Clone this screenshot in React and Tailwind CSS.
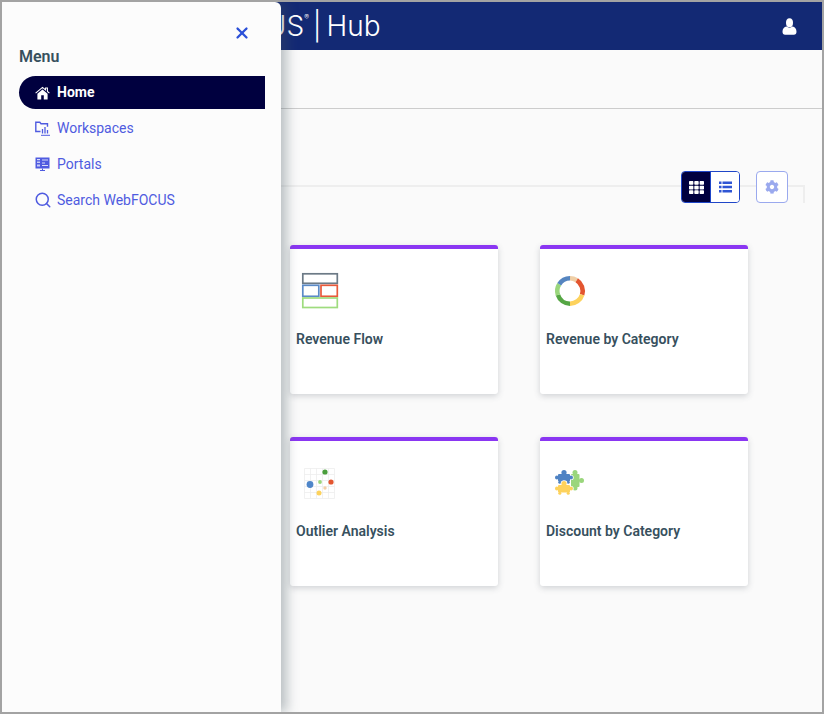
import React from 'react';
import { FaTh, FaCog } from 'react-icons/fa';
import { Search, X } from 'lucide-react';

function HomeIcon() {
  return (
    <svg width="15" height="14" viewBox="0 0 15 14" fill="currentColor">
      <path d="M7.5 3.6 2.4 7.8V13.5h3.8V9.3h2.6v4.2h3.8V7.8z" />
      <path d="M.6 7.2 7.5 1.4l3 2.5V2h1.9v3.5l2 1.7" fill="none" stroke="currentColor" strokeWidth="1.1" />
    </svg>
  );
}

function UserIcon() {
  return (
    <svg width="15" height="17" viewBox="0 0 15 17" fill="currentColor">
      <ellipse cx="7.5" cy="4.8" rx="3.5" ry="4.5" />
      <path d="M4.6 8.6c1.6 1.5 4.2 1.5 5.8 0 2.6.4 4.1 2.2 4.1 5.2 0 1.8-1 3-2.6 3H3.1c-1.6 0-2.6-1.2-2.6-3 0-3 1.5-4.8 4.1-5.2z" />
    </svg>
  );
}

function ListIcon() {
  return (
    <svg width="13" height="12" viewBox="0 0 13 12" fill="currentColor">
      <rect x="0" y="0.5" width="2.5" height="2.5" />
      <rect x="3.5" y="0.5" width="9.5" height="2.5" />
      <rect x="0" y="4.75" width="2.5" height="2.5" />
      <rect x="3.5" y="4.75" width="9.5" height="2.5" />
      <rect x="0" y="9" width="2.5" height="2.5" />
      <rect x="3.5" y="9" width="9.5" height="2.5" />
    </svg>
  );
}

function WorkspacesIcon() {
  return (
    <svg width="15" height="15" viewBox="0 0 15 15" fill="none" stroke="currentColor">
      <path d="M5.5 10.5H.8V1.2h4L6 2.7h6.5v3" strokeWidth="1.4" />
      <path d="M7.5 8v4.5M10 6v6.5M12.5 9v3.5" strokeWidth="1.3" />
      <path d="M6 14.3h9" strokeWidth="1" />
    </svg>
  );
}

function PortalsIcon() {
  return (
    <svg width="15" height="15" viewBox="0 0 15 15">
      <rect x="0.5" y="0.5" width="14" height="11" fill="currentColor" />
      <rect x="2" y="2" width="3" height="1.2" fill="#fff" opacity="0.8" />
      <rect x="2" y="4.5" width="3" height="1.5" fill="#fff" opacity="0.7" />
      <rect x="2" y="7.5" width="3" height="2" fill="#fff" opacity="0.7" />
      <path d="M7 3h6M7 6h3M7 8.5h6" stroke="#fff" strokeWidth="1" opacity="0.8" />
      <path d="M5 13.5h5M7.5 11.5v2" stroke="currentColor" strokeWidth="1" />
    </svg>
  );
}

function FlowIcon() {
  return (
    <svg width="40" height="40" viewBox="0 0 40 40" fill="none" strokeWidth="1.7">
      <rect x="2.8" y="2.8" width="34.5" height="9.5" stroke="#6c7a86" />
      <rect x="2.8" y="14.3" width="16" height="11" stroke="#5b8ac7" />
      <rect x="21" y="14.3" width="16.3" height="11" stroke="#e8593a" />
      <rect x="2.8" y="27" width="34.5" height="9.5" stroke="#9fdc7e" />
    </svg>
  );
}

const donut = [
  ['#f0cfa6', 0, 32],
  ['#e3552f', 32, 75],
  ['#fdd25c', 107, 73],
  ['#55a644', 180, 72],
  ['#9ad67c', 252, 50],
  ['#5585c0', 302, 58],
];

function DonutIcon() {
  return (
    <svg width="40" height="40" viewBox="0 0 40 40" fill="none">
      {donut.map(([color, start, len]) => (
        <circle
          key={color}
          cx="20"
          cy="20"
          r="12.7"
          stroke={color}
          strokeWidth="4.6"
          pathLength="360"
          strokeDasharray={`${len} 360`}
          transform={`rotate(${start - 90} 20 20)`}
        />
      ))}
    </svg>
  );
}

function ScatterIcon() {
  const lines = [4.5, 10.5, 16.5, 22.5, 28.5, 34.5];
  return (
    <svg width="40" height="40" viewBox="0 0 40 40">
      {lines.map((p) => (
        <g key={p} stroke="#eeeeee" strokeWidth="0.8">
          <path d={`M${p} 5.5V35.5`} />
          <path d={`M4.5 ${p + 1}H34.5`} />
        </g>
      ))}
      <circle cx="25" cy="9" r="2.6" fill="#4a9e3c" />
      <circle cx="10" cy="21.5" r="3.4" fill="#4f86c9" />
      <circle cx="20" cy="19" r="1.9" fill="#9ad67c" />
      <circle cx="31" cy="19" r="2.6" fill="#e3552f" />
      <circle cx="25" cy="25" r="1.7" fill="#f3cfa8" />
      <circle cx="19" cy="30" r="2.5" fill="#fdd25c" />
    </svg>
  );
}

function PieceShape(props) {
  return (
    <g {...props}>
      <rect x="3" y="4" width="12" height="7.5" rx="1" />
      <circle cx="9" cy="2.6" r="2.6" />
      <circle cx="1.9" cy="7.5" r="1.9" />
      <circle cx="16.1" cy="7.5" r="1.9" />
      <circle cx="4.8" cy="12.2" r="1.5" />
      <circle cx="13.2" cy="12.2" r="1.5" />
    </g>
  );
}

function Piece({ color, x, y }) {
  return (
    <g transform={`translate(${x} ${y})`}>
      <PieceShape fill="#fff" stroke="#fff" strokeWidth="1.4" />
      <PieceShape fill={color} />
    </g>
  );
}

function PuzzleIcon() {
  return (
    <svg width="40" height="40" viewBox="0 0 40 40">
      <g fill="#9ad67c">
        <rect x="21" y="11" width="8.5" height="13" rx="1" />
        <circle cx="25" cy="9.5" r="2.5" />
        <circle cx="25" cy="25" r="2.5" />
        <circle cx="31.5" cy="17.5" r="2.5" />
      </g>
      <Piece color="#4f83c4" x="5" y="7" />
      <Piece color="#fdd25c" x="5" y="18" />
    </svg>
  );
}

const cards = [
  { title: 'Revenue Flow', icon: <FlowIcon /> },
  { title: 'Revenue by Category', icon: <DonutIcon /> },
  { title: 'Outlier Analysis', icon: <ScatterIcon /> },
  { title: 'Discount by Category', icon: <PuzzleIcon /> },
];

const links = [
  { label: 'Workspaces', icon: <WorkspacesIcon /> },
  { label: 'Portals', icon: <PortalsIcon /> },
  { label: 'Search WebFOCUS', icon: <Search size={18} strokeWidth={2} className="shrink-0" /> },
];

export default function App() {
  return (
    <div className="relative h-[714px] w-[824px] overflow-hidden border-2 border-[#a3a3a3] bg-[#fafafa] font-['Roboto',sans-serif]">
      {/* Header */}
      <header className="flex h-[48px] items-center justify-between bg-[#132974] pl-[147px] pr-[25px] text-white">
        <div className="flex items-baseline font-['Inter',sans-serif] text-[28px] font-light leading-none">
          <span>WebFOCUS</span>
          <sup className="-translate-y-[13px] text-[7px]">®</sup>
          <span className="ml-[4px]">|</span>
          <span className="ml-[5px]">Hub</span>
        </div>
        <UserIcon />
      </header>
      <div className="h-[59px] border-b border-[#cccccc]" />

      {/* Content */}
      <main className="relative pt-[62px]">
        <div className="absolute left-[100px] right-[17px] top-[76px] h-[18px] border-r-2 border-t-2 border-[#eeeeee]" />
        <div className="relative flex justify-end gap-4 pr-[34px]">
          <div className="flex h-[32px] w-[59px] overflow-hidden rounded border border-[#1f46c8]">
            <button className="flex w-[28px] items-center justify-center bg-[#00003f] text-white">
              <FaTh size={15} />
            </button>
            <button className="flex flex-1 items-center justify-center border-l border-[#1f46c8] bg-white text-[#2f55d4]">
              <ListIcon />
            </button>
          </div>
          <button className="flex h-[32px] w-[32px] items-center justify-center rounded border border-[#9aa9ee] bg-white text-[#9aa9ee]">
            <FaCog size={14} />
          </button>
        </div>
        <div className="grid w-[750px] grid-cols-[208px_208px] gap-x-[42px] gap-y-[43px] pl-[288px] pt-[42px]">
          {cards.map((card) => (
            <div
              key={card.title}
              className="h-[149px] rounded-[3px] border-t-4 border-[#8a36f2] bg-white px-[6px] pt-[22px] shadow-[0_2px_6px_rgba(60,70,80,0.22)]"
            >
              <div className="ml-[4px]">{card.icon}</div>
              <div className="mt-[18px] text-[14px] font-semibold leading-5 text-[#37505e]">{card.title}</div>
            </div>
          ))}
        </div>
      </main>

      {/* Menu drawer */}
      <aside className="absolute bottom-0 left-0 top-0 w-[279px] rounded-tr-[6px] bg-[#fcfcfc] pl-[17px] pr-[16px] shadow-[6px_0_12px_rgba(70,85,95,0.35)]">
        <div className="flex justify-end pr-[14px] pt-[22px] text-[#2b50d8]">
          <X size={18} strokeWidth={3} />
        </div>
        <h2 className="mt-[5px] text-[16px] font-semibold leading-5 text-[#37505e]">Menu</h2>
        <nav className="mt-[9px]">
          <div className="flex h-[33px] items-center gap-[7px] rounded-l-full bg-[#00003f] pl-[16px] text-[14px] font-bold text-white">
            <HomeIcon />
            Home
          </div>
          <ul className="pt-[1px]">
            {links.map((link) => (
              <li key={link.label} className="flex h-[36px] items-center gap-[7px] pl-[16px] text-[14px] text-[#4f5be0]">
                <span className="flex w-[15px] justify-center">{link.icon}</span>
                {link.label}
              </li>
            ))}
          </ul>
        </nav>
      </aside>
    </div>
  );
}
